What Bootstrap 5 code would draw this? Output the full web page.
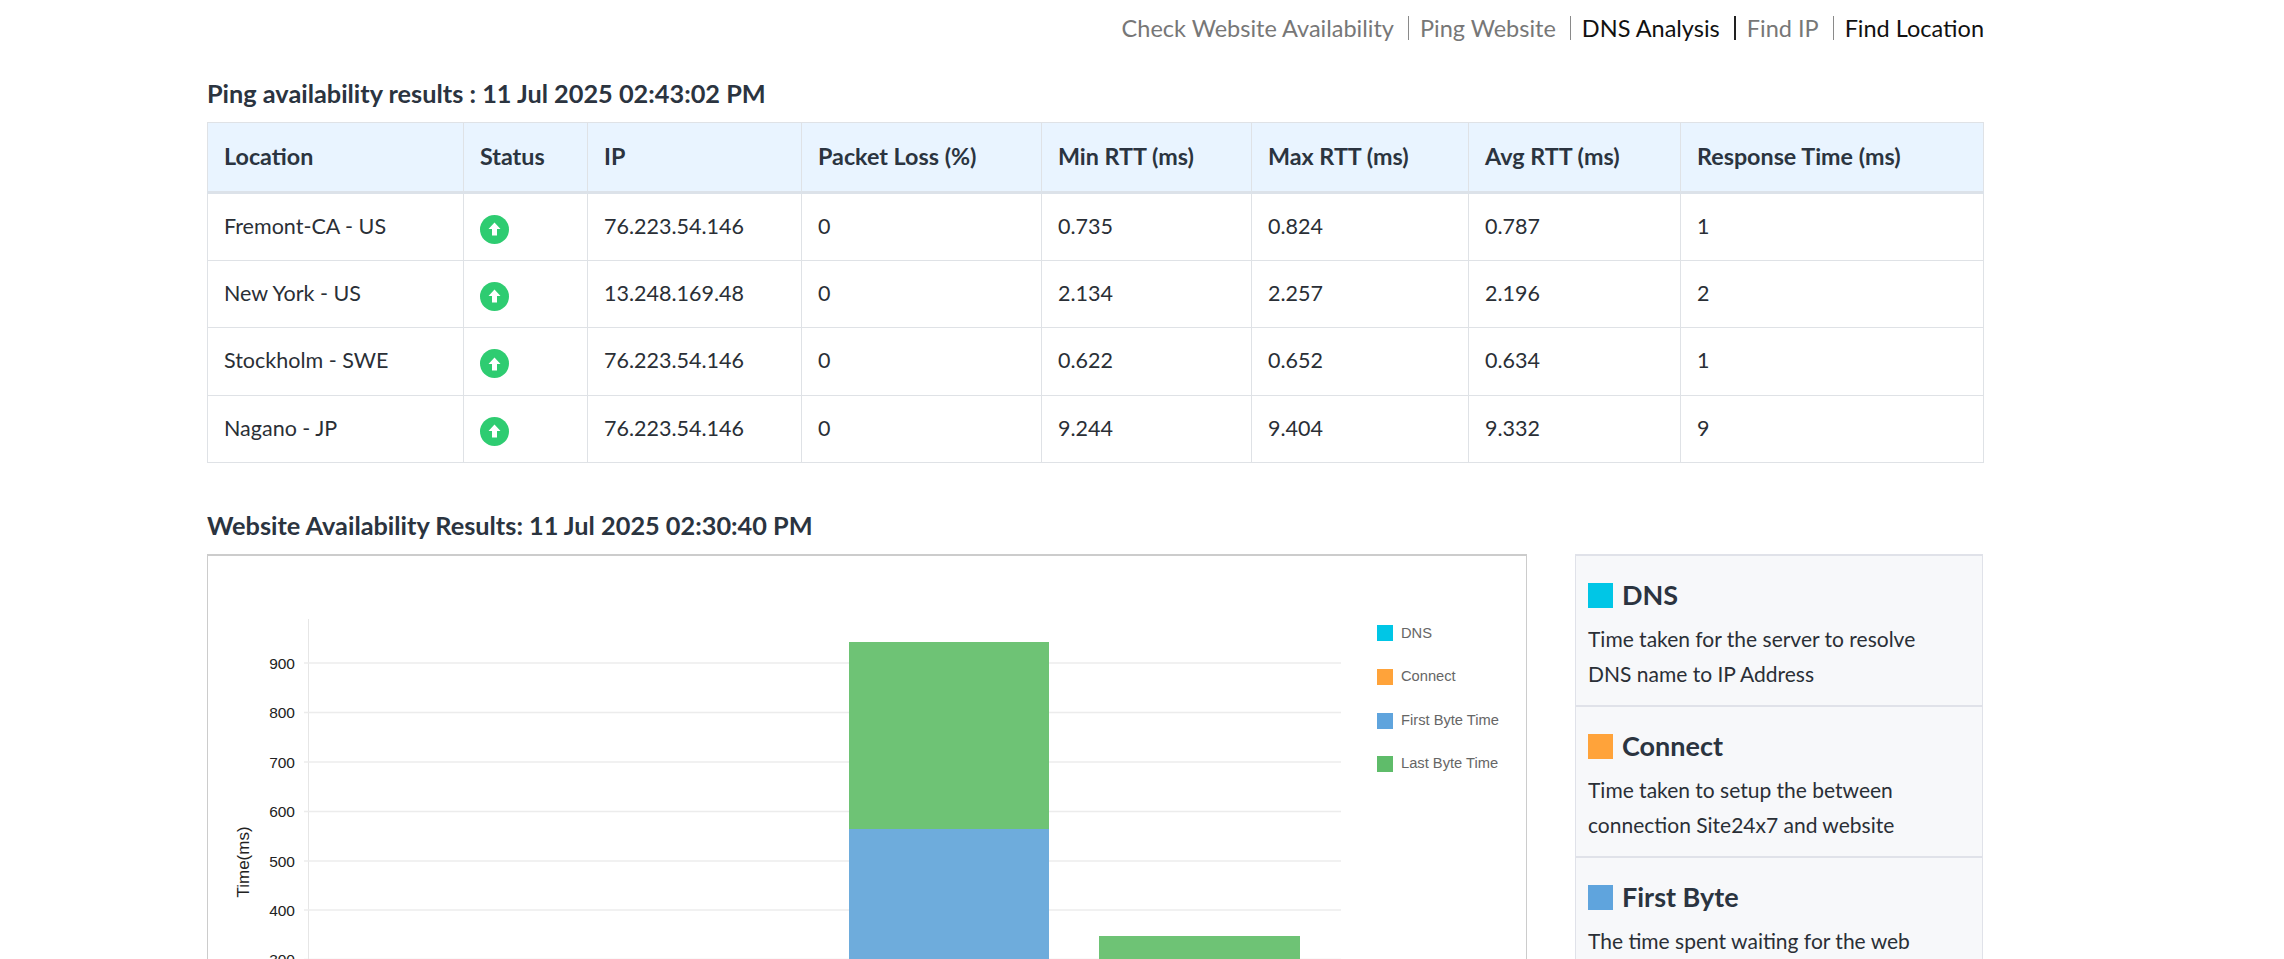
<!DOCTYPE html>
<html lang="en">
<head>
<meta charset="utf-8">
<title>Ping availability results</title>
<link rel="stylesheet" href="https://cdn.jsdelivr.net/npm/bootstrap@5.3.0/dist/css/bootstrap.min.css">
<style>
html,body{height:959px;overflow:hidden}
body{font-family:Lato,"Noto Sans",sans-serif;color:#212934;background:#fff}
.page-wrap{width:1777px;margin-left:207px}
.top-links{height:42px;margin-top:14px;margin-bottom:0;font-size:23.5px;line-height:25px;padding:0;list-style:none}
.top-links li{padding-left:11px;padding-right:14px;border-left:1px solid #8a8a8a;height:24px;margin-top:2px}
.top-links li:first-child{border-left:0}
.top-links li:last-child{padding-right:0}
.top-links li.sep-dark{border-left:2px solid #222}
.top-links a{text-decoration:none;color:#777}
.top-links a.on{color:#111}
.sec-title{font-size:25.3px;font-weight:700;line-height:30px;color:#2b3440;margin:0}
.title-ping{margin-top:22px;margin-bottom:14px}
.title-site{margin-top:47px;margin-bottom:14px}
.ping-table{table-layout:fixed;width:1777px;margin:0;font-size:21.5px;color:#2a2f36;border-color:#dfe2e6}
.ping-table th{background:#e9f4ff;font-weight:700;font-size:23.3px;height:70px;padding:0 16px 2px;vertical-align:middle;border-bottom:3px solid #dce2e9;color:#2b3440}
.ping-table td{height:67.5px;padding:0 16px 2px;vertical-align:middle}
.c1{width:256px}.c2{width:124px}.c3{width:214px}.c4{width:240px}.c5{width:210px}.c6{width:217px}.c7{width:212px}
.up-dot{width:29px;height:29px;border-radius:50%;background:#2ecc71;margin-top:7px}
.chart-box{width:1320px;height:600px;border:1px solid #ccc;border-top:2px solid #ccc;overflow:hidden}
.chart-box svg{display:block}
.axis-txt{font-family:"Liberation Sans",Arial,sans-serif;font-size:15.5px;fill:#222}
.axis-name{font-size:17px}
.leg-txt{font-family:"Liberation Sans",Arial,sans-serif;font-size:14.7px;fill:#666}
.info-col{width:408px;margin-left:48px}
.info-item{background:#f7f8fa;border:1px solid #e0e2e9;border-bottom-width:0;border-top-width:2px;height:151px;padding:24px 30px 0 12px}
.info-item h5{font-size:27px;font-weight:700;line-height:30px;margin:0 0 11px;color:#2b3440}
.info-item p{font-size:21px;line-height:35px;margin:0;color:#2a2f36}
.swatch{width:25px;height:25px;margin-right:9px}
.sw-dns{background:#00c6e6}.sw-con{background:#ffa33a}.sw-fb{background:#5fa4dd}
</style>
</head>
<body>
<div class="page-wrap">
  <ul class="top-links d-flex justify-content-end">
    <li><a href="#">Check Website Availability</a></li>
    <li><a href="#">Ping Website</a></li>
    <li><a class="on" href="#">DNS Analysis</a></li>
    <li class="sep-dark"><a href="#">Find IP</a></li>
    <li><a class="on" href="#">Find Location</a></li>
  </ul>

  <h4 class="sec-title title-ping">Ping availability results : 11 Jul 2025 02:43:02 PM</h4>
  <table class="table table-bordered ping-table">
    <colgroup><col class="c1"><col class="c2"><col class="c3"><col class="c4"><col class="c5"><col class="c6"><col class="c7"><col></colgroup>
    <thead>
      <tr><th>Location</th><th>Status</th><th>IP</th><th>Packet Loss (%)</th><th>Min RTT (ms)</th><th>Max RTT (ms)</th><th>Avg RTT (ms)</th><th>Response Time (ms)</th></tr>
    </thead>
    <tbody>
      <tr><td>Fremont-CA - US</td><td><div class="up-dot d-flex align-items-center justify-content-center"><svg width="13" height="14" viewBox="0 0 13 14"><path d="M6.5 0.5 12.5 7H9v6.5H4V7H.5z" fill="#fff"/></svg></div></td><td>76.223.54.146</td><td>0</td><td>0.735</td><td>0.824</td><td>0.787</td><td>1</td></tr>
      <tr><td>New York - US</td><td><div class="up-dot d-flex align-items-center justify-content-center"><svg width="13" height="14" viewBox="0 0 13 14"><path d="M6.5 0.5 12.5 7H9v6.5H4V7H.5z" fill="#fff"/></svg></div></td><td>13.248.169.48</td><td>0</td><td>2.134</td><td>2.257</td><td>2.196</td><td>2</td></tr>
      <tr><td>Stockholm - SWE</td><td><div class="up-dot d-flex align-items-center justify-content-center"><svg width="13" height="14" viewBox="0 0 13 14"><path d="M6.5 0.5 12.5 7H9v6.5H4V7H.5z" fill="#fff"/></svg></div></td><td>76.223.54.146</td><td>0</td><td>0.622</td><td>0.652</td><td>0.634</td><td>1</td></tr>
      <tr><td>Nagano - JP</td><td><div class="up-dot d-flex align-items-center justify-content-center"><svg width="13" height="14" viewBox="0 0 13 14"><path d="M6.5 0.5 12.5 7H9v6.5H4V7H.5z" fill="#fff"/></svg></div></td><td>76.223.54.146</td><td>0</td><td>9.244</td><td>9.404</td><td>9.332</td><td>9</td></tr>
    </tbody>
  </table>

  <h4 class="sec-title title-site">Website Availability Results: 11 Jul 2025 02:30:40 PM</h4>
  <div class="d-flex align-items-start">
    <div class="chart-box flex-shrink-0">
      <svg width="1318" height="598" viewBox="208 557 1318 598">
        <line x1="308.5" y1="620" x2="308.5" y2="1155" stroke="#e6e6e6"/>
        <g stroke="#ececec" stroke-width="1.5">
          <line x1="304" y1="664" x2="1341" y2="664"/>
          <line x1="304" y1="713.5" x2="1341" y2="713.5"/>
          <line x1="304" y1="763" x2="1341" y2="763"/>
          <line x1="304" y1="812.5" x2="1341" y2="812.5"/>
          <line x1="304" y1="862" x2="1341" y2="862"/>
          <line x1="304" y1="911" x2="1341" y2="911"/>
          <line x1="304" y1="960.5" x2="1341" y2="960.5"/>
        </g>
        <g class="axis-txt" text-anchor="end">
          <text x="295" y="669.5">900</text>
          <text x="295" y="719">800</text>
          <text x="295" y="768.5">700</text>
          <text x="295" y="818">600</text>
          <text x="295" y="867.5">500</text>
          <text x="295" y="916.5">400</text>
          <text x="295" y="966">300</text>
        </g>
        <text class="axis-txt axis-name" transform="translate(249 863) rotate(-90)" text-anchor="middle">Time(ms)</text>
        <rect x="849" y="643" width="200" height="187" fill="#6ec375"/>
        <rect x="849" y="830" width="200" height="330" fill="#6eacdc"/>
        <rect x="1099" y="937" width="201" height="220" fill="#6ec375"/>
        <rect x="1377" y="626" width="16" height="16" fill="#00c6e6"/>
        <rect x="1377" y="670" width="16" height="16" fill="#ffa33a"/>
        <rect x="1377" y="714" width="16" height="16" fill="#5fa4dd"/>
        <rect x="1377" y="757" width="16" height="16" fill="#5fbc6a"/>
        <text class="leg-txt" x="1401" y="639">DNS</text>
        <text class="leg-txt" x="1401" y="682">Connect</text>
        <text class="leg-txt" x="1401" y="726">First Byte Time</text>
        <text class="leg-txt" x="1401" y="769">Last Byte Time</text>
      </svg>
    </div>
    <div class="info-col flex-shrink-0">
      <div class="info-item">
        <h5 class="d-flex align-items-center"><span class="swatch sw-dns"></span>DNS</h5>
        <p>Time taken for the server to resolve DNS name to IP Address</p>
      </div>
      <div class="info-item">
        <h5 class="d-flex align-items-center"><span class="swatch sw-con"></span>Connect</h5>
        <p>Time taken to setup the between connection Site24x7 and website</p>
      </div>
      <div class="info-item">
        <h5 class="d-flex align-items-center"><span class="swatch sw-fb"></span>First Byte</h5>
        <p>The time spent waiting for the web server to respond</p>
      </div>
    </div>
  </div>
</div>
<script src="https://cdn.jsdelivr.net/npm/bootstrap@5.3.0/dist/js/bootstrap.bundle.min.js"></script>
</body>
</html>
